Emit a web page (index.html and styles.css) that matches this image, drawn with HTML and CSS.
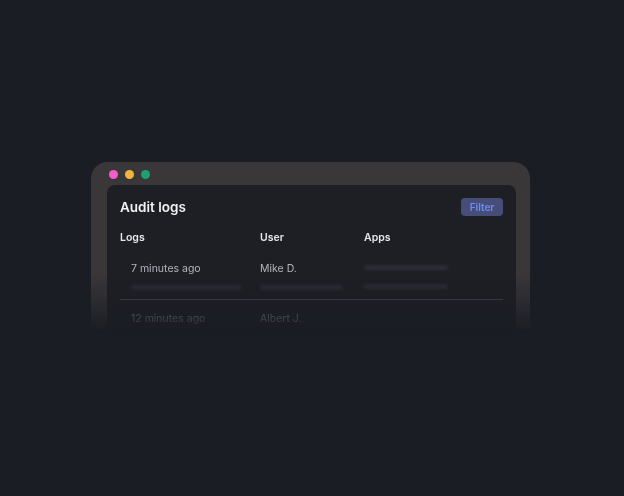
FILE: index.html
```html
<!DOCTYPE html>
<html lang="en">
<head>
    <meta charset="UTF-8">
    <title>Audit logs</title>
    <link rel="stylesheet" href="styles.css">
</head>
<body>
    <div class="window">
        <!-- Кнопки окна -->
        <div class="dots">
            <span class="dot pink"></span>
            <span class="dot yellow"></span>
            <span class="dot green"></span>
        </div>

        <div class="panel">
            <div class="panel-head">
                <h2>Audit logs</h2>
                <button class="filter">Filter</button>
            </div>

            <div class="row head">
                <div>Logs</div>
                <div>User</div>
                <div>Apps</div>
            </div>

            <div class="row item">
                <div class="cell first">
                    <span>7 minutes ago</span>
                    <i class="bar w110"></i>
                </div>
                <div class="cell">
                    <span>Mike D.</span>
                    <i class="bar w82"></i>
                </div>
                <div class="cell">
                    <i class="bar w84 top"></i>
                    <i class="bar w84"></i>
                </div>
            </div>

            <div class="row item">
                <div class="cell first">
                    <span>12 minutes ago</span>
                </div>
                <div class="cell">
                    <span>Albert J.</span>
                </div>
                <div class="cell"></div>
            </div>
        </div>
    </div>
</body>
</html>
```

FILE: styles.css
```css
body {
    margin: 0;
    height: 496px;
    background: #1b1d24;
    font-family: Inter, "Noto Sans", sans-serif;
    overflow: hidden;
}
.window {
    width: 439px;
    height: 180px;
    margin: 162px 0 0 91px;
    padding: 8px 14px 0 16px;
    box-sizing: border-box;
    background: #3a3739;
    border-radius: 16px 16px 0 0;
    overflow: hidden;
    -webkit-mask-image: linear-gradient(to bottom, #000 62%, transparent 95%);
    mask-image: linear-gradient(to bottom, #000 62%, transparent 95%);
}
.dots {
    display: flex;
    gap: 7px;
    padding-left: 2px;
    height: 9px;
}
.dot {
    width: 9px;
    height: 9px;
    border-radius: 50%;
}
.pink { background: #f25ccb; }
.yellow { background: #f4b53f; }
.green { background: #1c9f74; }
.panel {
    margin-top: 6px;
    background: #1e1f25;
    border-radius: 8px 8px 0 0;
    padding: 13px 13px 0 13px;
    height: 200px;
}
.panel-head {
    display: flex;
    justify-content: space-between;
    align-items: center;
    height: 18px;
}
.panel-head h2 {
    margin: 0;
    color: #f1f1f3;
    font-size: 13.5px;
    font-weight: 600;
}
.filter {
    background: #464d78;
    color: #6f8bf2;
    border: none;
    border-radius: 4px;
    font-family: inherit;
    font-size: 10px;
    font-weight: 600;
    height: 18px;
    width: 42px;
    padding: 0;
}
.row {
    display: grid;
    grid-template-columns: 140px 104px 1fr;
}
.head {
    margin-top: 15px;
    color: #e6e6ea;
    font-size: 10.5px;
    font-weight: 600;
    line-height: 14px;
}
.item {
    padding-top: 17px;
    height: 37px;
    font-size: 10.5px;
    color: #b4b4bc;
    border-bottom: 1px solid #4a4c55;
}
.item + .item {
    padding-top: 12px;
    height: 36px;
    border-bottom: none;
}
.cell {
    display: flex;
    flex-direction: column;
    line-height: 14px;
}
.cell.first {
    padding-left: 11px;
}
.bar {
    display: block;
    height: 5px;
    margin-top: 9px;
    background: #2c2e37;
    border-radius: 3px;
    filter: blur(1.5px);
}
.bar.top {
    margin-top: 3px;
    margin-bottom: 5px;
}
.w110 { width: 110px; }
.w82 { width: 82px; }
.w84 { width: 84px; }
```
